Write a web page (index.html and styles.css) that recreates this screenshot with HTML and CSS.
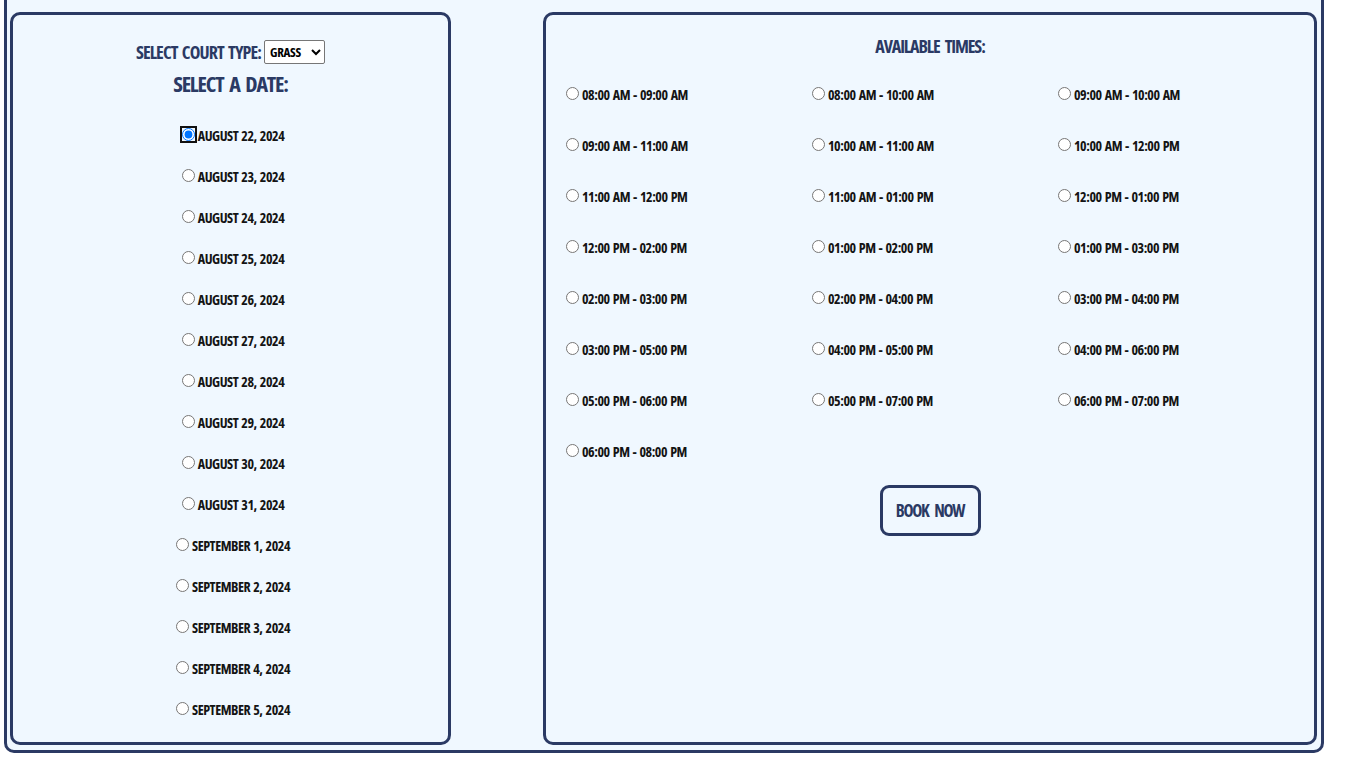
FILE: index.html
```html
<!DOCTYPE html>
<html>
<head>
<meta charset="utf-8">
<title>Court Booking</title>
<link rel="stylesheet" href="styles.css">
</head>
<body>
<div class="outer">
  <section class="panel panel-dates">
    <div class="court-row">
      <label class="court-label" for="court">Select court type:</label>
      <select id="court" class="court-select"><option>Grass</option><option>Clay</option><option>Hard</option></select>
    </div>
    <h2 class="date-title">Select a date:</h2>
    <div class="date-list">
      <label class="opt"><input type="radio" name="date" class="focused" checked>August 22, 2024</label>
      <label class="opt"><input type="radio" name="date">August 23, 2024</label>
      <label class="opt"><input type="radio" name="date">August 24, 2024</label>
      <label class="opt"><input type="radio" name="date">August 25, 2024</label>
      <label class="opt"><input type="radio" name="date">August 26, 2024</label>
      <label class="opt"><input type="radio" name="date">August 27, 2024</label>
      <label class="opt"><input type="radio" name="date">August 28, 2024</label>
      <label class="opt"><input type="radio" name="date">August 29, 2024</label>
      <label class="opt"><input type="radio" name="date">August 30, 2024</label>
      <label class="opt"><input type="radio" name="date">August 31, 2024</label>
      <label class="opt"><input type="radio" name="date">September 1, 2024</label>
      <label class="opt"><input type="radio" name="date">September 2, 2024</label>
      <label class="opt"><input type="radio" name="date">September 3, 2024</label>
      <label class="opt"><input type="radio" name="date">September 4, 2024</label>
      <label class="opt"><input type="radio" name="date">September 5, 2024</label>
    </div>
  </section>
  <section class="panel panel-times">
    <h2 class="times-title">Available times:</h2>
    <div class="time-grid">
      <label class="opt"><input type="radio" name="time">08:00 AM - 09:00 AM</label>
      <label class="opt"><input type="radio" name="time">08:00 AM - 10:00 AM</label>
      <label class="opt"><input type="radio" name="time">09:00 AM - 10:00 AM</label>
      <label class="opt"><input type="radio" name="time">09:00 AM - 11:00 AM</label>
      <label class="opt"><input type="radio" name="time">10:00 AM - 11:00 AM</label>
      <label class="opt"><input type="radio" name="time">10:00 AM - 12:00 PM</label>
      <label class="opt"><input type="radio" name="time">11:00 AM - 12:00 PM</label>
      <label class="opt"><input type="radio" name="time">11:00 AM - 01:00 PM</label>
      <label class="opt"><input type="radio" name="time">12:00 PM - 01:00 PM</label>
      <label class="opt"><input type="radio" name="time">12:00 PM - 02:00 PM</label>
      <label class="opt"><input type="radio" name="time">01:00 PM - 02:00 PM</label>
      <label class="opt"><input type="radio" name="time">01:00 PM - 03:00 PM</label>
      <label class="opt"><input type="radio" name="time">02:00 PM - 03:00 PM</label>
      <label class="opt"><input type="radio" name="time">02:00 PM - 04:00 PM</label>
      <label class="opt"><input type="radio" name="time">03:00 PM - 04:00 PM</label>
      <label class="opt"><input type="radio" name="time">03:00 PM - 05:00 PM</label>
      <label class="opt"><input type="radio" name="time">04:00 PM - 05:00 PM</label>
      <label class="opt"><input type="radio" name="time">04:00 PM - 06:00 PM</label>
      <label class="opt"><input type="radio" name="time">05:00 PM - 06:00 PM</label>
      <label class="opt"><input type="radio" name="time">05:00 PM - 07:00 PM</label>
      <label class="opt"><input type="radio" name="time">06:00 PM - 07:00 PM</label>
      <label class="opt"><input type="radio" name="time">06:00 PM - 08:00 PM</label>
    </div>
    <div class="btn-row"><button class="book-btn" type="button">Book now</button></div>
  </section>
</div>
</body>
</html>
```

FILE: styles.css
```css
* { box-sizing: border-box; }

html, body {
  margin: 0;
  padding: 0;
  background: #ffffff;
  overflow: hidden;
}

body {
  font-family: "Open Sans", "DejaVu Sans", sans-serif;
  font-stretch: 75%;
  font-weight: 700;
  text-transform: uppercase;
  color: #141414;
}

.outer {
  width: 1320px;
  margin: -20px 0 0 4px;
  border: 3px solid #2b3a64;
  border-radius: 10px;
  background: #f0f8ff;
  padding: 29px 4px 5px 3px;
  display: flex;
  justify-content: space-between;
}

.panel {
  height: 733px;
  border: 3px solid #2b3a64;
  border-radius: 10px;
  background: #f0f8ff;
}

.panel-dates {
  width: 441px;
  padding-top: 25px;
  display: flex;
  flex-direction: column;
  align-items: center;
}

.court-row {
  height: 24px;
  display: flex;
  align-items: center;
}

.court-label {
  font-size: 18px;
  letter-spacing: -0.9px;
  word-spacing: 2px;
  color: #2b3a64;
  margin-right: 3px;
}

.court-select {
  width: 61px;
  height: 24px;
  font-family: inherit;
  font-stretch: 75%;
  font-weight: 700;
  font-size: 13px;
  letter-spacing: -0.3px;
  text-transform: uppercase;
  color: #000;
  background: #fff;
  border: 1px solid #767676;
  border-radius: 2px;
  padding: 0 1px;
}

.date-title {
  margin: 5px 0 0;
  height: 28px;
  line-height: 28px;
  font-size: 22px;
  letter-spacing: -1.2px;
  word-spacing: 3px;
  color: #2b3a64;
  white-space: nowrap;
}

.date-list {
  margin-top: 18px;
  display: flex;
  flex-direction: column;
  align-items: center;
}

.date-list .opt {
  height: 41px;
}

.opt {
  display: flex;
  align-items: center;
  font-size: 14px;
  letter-spacing: -0.45px;
  word-spacing: 1px;
  color: #141414;
  white-space: nowrap;
}

.opt input {
  margin: 0 3px 2px 5px;
  width: 13px;
  height: 13px;
}

.opt input.focused {
  outline: 2px solid #111;
  outline-offset: 0;
  border-radius: 5px;
}

.panel-times {
  width: 774px;
  padding: 19px 15px 0;
  display: flex;
  flex-direction: column;
}

.times-title {
  margin: 0;
  height: 24px;
  line-height: 24px;
  text-align: center;
  font-size: 18px;
  letter-spacing: -1.1px;
  word-spacing: 3px;
  color: #2b3a64;
}

.time-grid {
  margin-top: 11px;
  display: grid;
  grid-template-columns: repeat(3, 1fr);
  grid-auto-rows: 51px;
}

.btn-row {
  margin-top: 8px;
  display: flex;
  justify-content: center;
}

.book-btn {
  width: 101px;
  height: 51px;
  border: 3px solid #2b3a64;
  border-radius: 9px;
  background: #f0f8ff;
  font-family: inherit;
  font-stretch: 75%;
  font-weight: 700;
  font-size: 17px;
  letter-spacing: -1.3px;
  word-spacing: 4px;
  text-transform: uppercase;
  white-space: nowrap;
  color: #2b3a64;
  padding: 0;
}
```
